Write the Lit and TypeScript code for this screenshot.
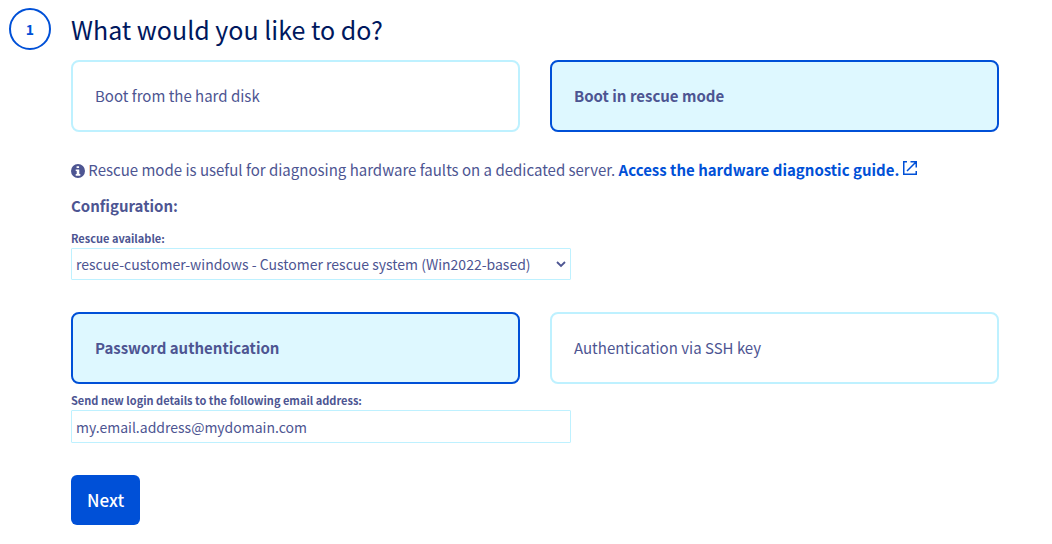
import { LitElement, html, css, svg } from "lit";
import { customElement, state } from "lit/decorators.js";
import { classMap } from "lit/directives/class-map.js";

interface Choice {
  value: string;
  label: string;
}

const BOOT_MODES: Choice[] = [
  { value: "disk", label: "Boot from the hard disk" },
  { value: "rescue", label: "Boot in rescue mode" },
];

const AUTH_MODES: Choice[] = [
  { value: "password", label: "Password authentication" },
  { value: "ssh", label: "Authentication via SSH key" },
];

@customElement("app-root")
export class AppRoot extends LitElement {
  static styles = css`
    :host {
      display: block;
      box-sizing: border-box;
      padding: 8px 53px 19px 9px;
      background: #fff;
      color: #4d5592;
      font: 400 15px/24px "Noto Sans CJK SC", "Noto Sans", sans-serif;
    }
    *, *::before, *::after {
      box-sizing: border-box;
    }
    .step {
      display: grid;
      grid-template-columns: 42px minmax(0, 1fr);
      column-gap: 20px;
    }
    .number {
      display: flex;
      align-items: center;
      justify-content: center;
      width: 42px;
      height: 42px;
      border: 2px solid #0050d7;
      border-radius: 50%;
      color: #0050d7;
      font-size: 14px;
      font-weight: 700;
    }
    h2 {
      margin: 0 0 10px;
      color: #00185e;
      font-size: 25px;
      font-weight: 400;
      line-height: 42px;
    }
    .choices {
      display: grid;
      grid-template-columns: 1fr 1fr;
      gap: 30px;
      margin: 0;
      padding: 0;
      border: 0;
    }
    .choice {
      display: flex;
      align-items: center;
      height: 72px;
      padding: 0 22px;
      border: 2px solid #bef1ff;
      border-radius: 8px;
      cursor: pointer;
    }
    .choice.selected {
      border-color: #0050d7;
      background: #def8ff;
      font-weight: 700;
    }
    .choice input {
      appearance: none;
      width: 0;
      height: 0;
      margin: 0;
    }
    .choice:focus-within {
      outline: 2px solid #85d9fd;
    }
    .hint {
      margin: 26px 0 12px;
    }
    .hint .info {
      width: 14px;
      height: 14px;
      vertical-align: -2px;
      fill: #4d5592;
    }
    .hint a {
      color: #0050d7;
      font-weight: 700;
      text-decoration: none;
    }
    .hint .external {
      width: 14px;
      height: 14px;
      vertical-align: 1px;
      fill: none;
      stroke: #0050d7;
      stroke-width: 1.5;
    }
    h3 {
      margin: 0 0 12px;
      font-size: 15px;
      font-weight: 700;
      line-height: 24px;
    }
    .field {
      display: flex;
      flex-direction: column;
      gap: 2px;
      max-width: 500px;
    }
    .field label {
      font-size: 11px;
      font-weight: 700;
      line-height: 16px;
    }
    .field input,
    .field select {
      width: 100%;
      height: 32px;
      margin: 0;
      padding: 0 4px;
      border: 1px solid #bef1ff;
      border-radius: 1px;
      background: #fff;
      color: inherit;
      font: inherit;
      font-size: 14px;
    }
    .select {
      display: grid;
      align-items: center;
      margin-bottom: 32px;
    }
    .select > * {
      grid-area: 1 / 1;
    }
    .select select {
      appearance: none;
    }
    .select svg {
      justify-self: end;
      width: 10px;
      height: 8px;
      margin-right: 5px;
      fill: none;
      stroke: #4d5592;
      stroke-width: 1.8;
      pointer-events: none;
    }
    .email {
      margin: 8px 0 32px;
    }
    .field.email input {
      height: 33px;
    }
    .next {
      height: 50px;
      padding: 0 16px;
      border: 0;
      border-radius: 6px;
      background: #0050d7;
      color: #fff;
      font: 500 17px/24px "Noto Sans CJK SC", "Noto Sans", sans-serif;
      cursor: pointer;
    }
  `;

  @state() private boot = "rescue";
  @state() private auth = "password";

  private choices(
    name: string,
    title: string,
    items: Choice[],
    current: string,
    pick: (value: string) => void,
  ) {
    return html`<div class="choices" role="radiogroup" aria-label=${title}>
      ${items.map(
        (item) => html`<label
          class=${classMap({ choice: true, selected: item.value === current })}
        >
          <input
            type="radio"
            name=${name}
            .value=${item.value}
            .checked=${item.value === current}
            @change=${() => pick(item.value)}
          />${item.label}
        </label>`,
      )}
    </div>`;
  }

  render() {
    return html`<main class="step">
      <div class="number">1</div>
      <div>
        <h2>What would you like to do?</h2>
        ${this.choices("boot", "Boot mode", BOOT_MODES, this.boot, (v) => (this.boot = v))}
        <p class="hint">
          <svg class="info" viewBox="0 0 14 14" aria-hidden="true">
            ${svg`<path fill-rule="evenodd" d="M7 0a7 7 0 1 1 0 14A7 7 0 0 1 7 0ZM5.6 2.2v1.9h2.5V2.2ZM4.7 5.4v1.5h1v3.2h-1v1.6h4.6v-1.6h-1V5.4Z" />`}
          </svg>
          Rescue mode is useful for diagnosing hardware faults on a dedicated server.
          <a href="#guide"
            >Access the hardware diagnostic guide.
            <svg class="external" viewBox="0 0 14 14" aria-hidden="true">
              ${svg`<path d="M4 .75H.75v12.5h12.5V10M7.5.75h5.75V6.5M13.25.75 4 10" />`}
            </svg></a
          >
        </p>
        <h3>Configuration:</h3>
        <div class="field">
          <label for="rescue">Rescue available:</label>
          <div class="select">
            <select id="rescue">
              <option>rescue-customer-windows - Customer rescue system (Win2022-based)</option>
            </select>
            <svg viewBox="0 0 10 8" aria-hidden="true">
              ${svg`<path d="m1 2 4 4 4-4" />`}
            </svg>
          </div>
        </div>
        ${this.choices("auth", "Authentication", AUTH_MODES, this.auth, (v) => (this.auth = v))}
        <div class="field email">
          <label for="email">Send new login details to the following email address:</label>
          <input id="email" type="email" value="my.email.address@mydomain.com" />
        </div>
        <button class="next" type="button">Next</button>
      </div>
    </main>`;
  }
}
